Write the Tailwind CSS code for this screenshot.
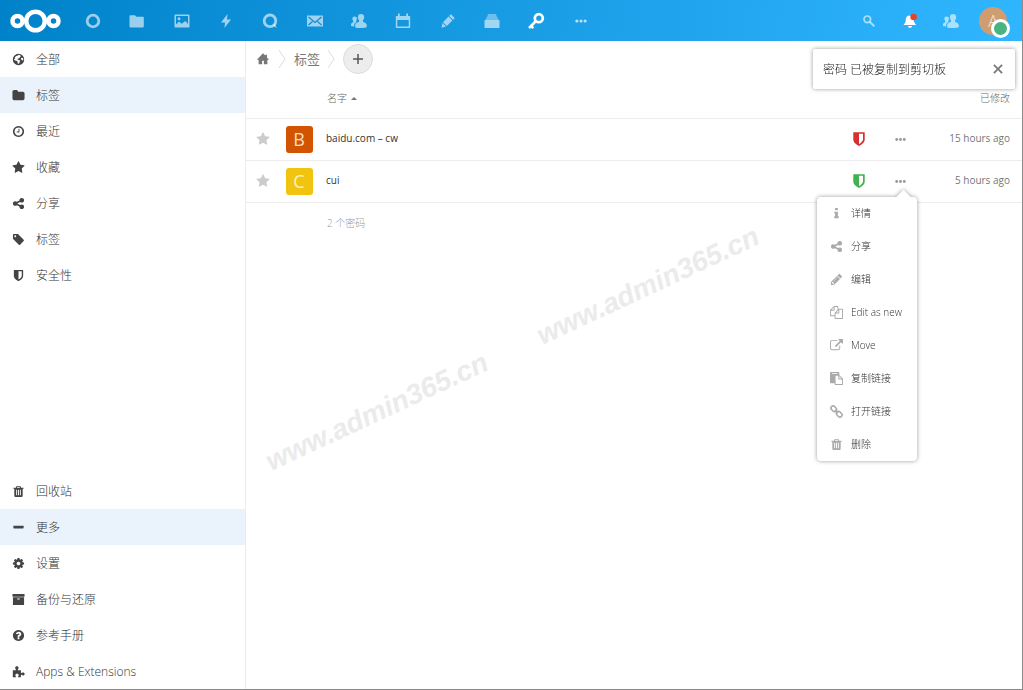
<!DOCTYPE html>
<html lang="zh-CN">
<head>
<meta charset="utf-8">
<title>密码</title>
<script src="https://cdn.jsdelivr.net/npm/@tailwindcss/browser@4"></script>
</head>
<body class="flex min-h-screen flex-col border-r border-b border-[#8a8a8a] bg-white font-['Open_Sans','Noto_Sans_CJK_SC',sans-serif] text-xs font-light text-[#333]">

<svg class="hidden" aria-hidden="true">
  <symbol id="star" viewBox="0 0 1792 1792"><path d="M1728 647q0 22-26 48l-363 354 86 500q1 7 1 20 0 21-10.500 35.500t-30.500 14.500q-19 0-40-12l-449-236-449 236q-22 12-40 12-21 0-31.500-14.500t-10.500-35.500q0-6 2-20l86-500-364-354q-25-27-25-48 0-37 56-46l502-73 225-455q19-41 49-41t49 41l225 455 502 73q56 9 56 46z"/></symbol>
  <symbol id="folder" viewBox="0 0 1792 1792"><path d="M1728 608v704q0 92-66 158t-158 66h-1216q-92 0-158-66t-66-158v-960q0-92 66-158t158-66h320q92 0 158 66t66 158v32h672q92 0 158 66t66 158z"/></symbol>
  <symbol id="clock" viewBox="0 0 1792 1792"><path d="M1024 544v448q0 14-9 23t-23 9h-320q-14 0-23-9t-9-23v-64q0-14 9-23t23-9h224v-352q0-14 9-23t23-9h64q14 0 23 9t9 23zm416 352q0-148-73-273t-198-198-273-73-273 73-198 198-73 273 73 273 198 198 273 73 273-73 198-198 73-273zm224 0q0 209-103 385.500t-279.500 279.500-385.500 103-385.500-103-279.500-279.500-103-385.500 103-385.500 279.500-279.500 385.500-103 385.500 103 279.500 279.500 103 385.500z"/></symbol>
  <symbol id="share" viewBox="0 0 1792 1792"><path d="M1344 1024q133 0 226.500 93.500t93.500 226.500-93.500 226.500-226.500 93.500-226.500-93.500-93.500-226.500q0-12 2-34l-360-180q-92 86-218 86-133 0-226.500-93.500t-93.500-226.500 93.500-226.500 226.500-93.500q126 0 218 86l360-180q-2-22-2-34 0-133 93.500-226.500t226.500-93.500 226.500 93.500 93.500 226.500-93.500 226.500-226.500 93.500q-126 0-218-86l-360 180q2 22 2 34t-2 34l360 180q92-86 218-86z"/></symbol>
  <symbol id="tag" viewBox="0 0 1792 1792"><path d="M576 448q0-53-37.500-90.500t-90.500-37.500-90.500 37.500-37.500 90.500 37.500 90.500 90.500 37.500 90.500-37.500 37.500-90.500zm1067 576q0 53-37 90l-491 492q-39 37-91 37-53 0-90-37l-715-716q-38-37-64.500-101t-26.500-117v-416q0-52 38-90t90-38h416q53 0 117 26.500t102 64.500l715 714q37 39 37 91z"/></symbol>
  <symbol id="shield" viewBox="0 0 1792 1792"><path d="M1344 960v-640h-448v1137q119-63 213-137 235-184 235-360zm192-768v768q0 86-33.500 170.500t-83 150-118 127.500-126.500 103-121 77.500-89.500 49.500-42.500 20q-12 6-26 6t-26-6q-16-7-42.500-20t-89.500-49.500-121-77.500-126.500-103-118-127.500-83-150-33.500-170.500v-768q0-26 19-45t45-19h1152q26 0 45 19t19 45z"/></symbol>
  <symbol id="trash" viewBox="0 0 1792 1792"><path d="M704 1376v-704q0-14-9-23t-23-9h-64q-14 0-23 9t-9 23v704q0 14 9 23t23 9h64q14 0 23-9t9-23zm256 0v-704q0-14-9-23t-23-9h-64q-14 0-23 9t-9 23v704q0 14 9 23t23 9h64q14 0 23-9t9-23zm256 0v-704q0-14-9-23t-23-9h-64q-14 0-23 9t-9 23v704q0 14 9 23t23 9h64q14 0 23-9t9-23zm-544-992h448l-48-117q-7-9-17-11h-317q-10 2-17 11zm928 32v64q0 14-9 23t-23 9h-96v948q0 83-47 143.500t-113 60.500h-832q-66 0-113-58.500t-47-141.500v-952h-96q-14 0-23-9t-9-23v-64q0-14 9-23t23-9h309l70-167q15-37 54-63t79-26h320q40 0 79 26t54 63l70 167h309q14 0 23 9t9 23z"/></symbol>
  <symbol id="minus" viewBox="0 0 1792 1792"><path d="M1600 736v192q0 40-28 68t-68 28h-1216q-40 0-68-28t-28-68v-192q0-40 28-68t68-28h1216q40 0 68 28t28 68z"/></symbol>
  <symbol id="cog" viewBox="0 0 1792 1792"><path d="M1152 896q0-106-75-181t-181-75-181 75-75 181 75 181 181 75 181-75 75-181zm512-109v222q0 12-8 23t-20 13l-185 28q-19 54-39 91 35 50 107 138 10 12 10 25t-9 23q-27 37-99 108t-94 71q-12 0-26-9l-138-108q-44 23-91 38-16 136-29 186-7 28-36 28h-222q-14 0-24.500-8.500t-11.500-21.500l-28-184q-49-16-90-37l-141 107q-10 9-25 9-14 0-25-11-126-114-165-168-7-10-7-23 0-12 8-23 15-21 51-66.500t54-70.500q-27-50-41-99l-183-27q-13-2-21-12.500t-8-23.500v-222q0-12 8-23t19-13l186-28q14-46 39-92-40-57-107-138-10-12-10-24 0-10 9-23 26-36 98.500-107.500t94.500-71.500q13 0 26 10l138 107q44-23 91-38 16-136 29-186 7-28 36-28h222q14 0 24.500 8.500t11.500 21.500l28 184q49 16 90 37l142-107q9-9 24-9 13 0 25 10 129 119 165 170 7 8 7 22 0 12-8 23-15 21-51 66.500t-54 70.500q26 50 41 98l183 28q13 2 21 12.500t8 23.500z"/></symbol>
  <symbol id="archive" viewBox="0 0 1792 1792"><path d="M1088 832q0-26-19-45t-45-19h-256q-26 0-45 19t-19 45 19 45 45 19h256q26 0 45-19t19-45zm576-192v960q0 26-19 45t-45 19h-1408q-26 0-45-19t-19-45v-960q0-26 19-45t45-19h1408q26 0 45 19t19 45zm64-448v256q0 26-19 45t-45 19h-1536q-26 0-45-19t-19-45v-256q0-26 19-45t45-19h1536q26 0 45 19t19 45z"/></symbol>
  <symbol id="question" viewBox="0 0 1792 1792"><path d="M1024 1376v-192q0-14-9-23t-23-9h-192q-14 0-23 9t-9 23v192q0 14 9 23t23 9h192q14 0 23-9t9-23zm256-672q0-88-55.500-163t-138.500-116-170-41q-243 0-371 213-15 24 8 42l132 100q7 6 19 6 16 0 25-12 53-68 86-92 34-24 86-24 48 0 85.500 26t37.500 59q0 38-20 61t-68 45q-63 28-115.500 86.500t-52.500 125.500v36q0 14 9 23t23 9h192q14 0 23-9t9-23q0-19 21.500-49.500t54.500-49.500q32-18 49-28.500t46-35 44.500-48 28-60.500 12.500-81zm384 192q0 209-103 385.500t-279.500 279.500-385.500 103-385.500-103-279.500-279.500-103-385.500 103-385.500 279.500-279.500 385.500-103 385.500 103 279.500 279.500 103 385.500z"/></symbol>
  <symbol id="pencil" viewBox="0 0 1792 1792"><path d="M491 1536l91-91-235-235-91 91v107h128v128h107zm523-928q0-22-22-22-10 0-17 7l-542 542q-7 7-7 17 0 22 22 22 10 0 17-7l542-542q7-7 7-17zm-54-192l416 416-832 832h-416v-416zm683 96q0 53-37 90l-166 166-416-416 166-165q36-38 90-38 53 0 91 38l235 234q37 39 37 91z"/></symbol>
  <symbol id="external" viewBox="0 0 1792 1792"><path d="M1408 928v320q0 119-84.500 203.500t-203.500 84.500h-832q-119 0-203.500-84.500t-84.500-203.500v-832q0-119 84.500-203.500t203.500-84.500h704q14 0 23 9t9 23v64q0 14-9 23t-23 9h-704q-66 0-113 47t-47 113v832q0 66 47 113t113 47h832q66 0 113-47t47-113v-320q0-14 9-23t23-9h64q14 0 23 9t9 23zm384-864v512q0 26-19 45t-45 19-45-19l-176-176-652 652q-10 10-23 10t-23-10l-114-114q-10-10-10-23t10-23l652-652-176-176q-19-19-19-45t19-45 45-19h512q26 0 45 19t19 45z"/></symbol>
  <symbol id="files" viewBox="0 0 1792 1792"><path d="M1696 384q40 0 68 28t28 68v1216q0 40-28 68t-68 28h-960q-40 0-68-28t-28-68v-288h-544q-40 0-68-28t-28-68v-672q0-40 20-88t48-76l408-408q28-28 76-48t88-20h416q40 0 68 28t28 68v328q68-40 128-40h416zm-544 213l-299 299h299v-299zm-640-384l-299 299h299v-299zm196 647l316-316v-416h-384v416q0 40-28 68t-68 28h-416v640h512v-256q0-40 20-88t48-76zm956 804v-1152h-384v416q0 40-28 68t-68 28h-416v640h896z"/></symbol>
  <symbol id="info" viewBox="0 0 1792 1792"><path d="M1216 1344v128q0 26-19 45t-45 19h-512q-26 0-45-19t-19-45v-128q0-26 19-45t45-19h64v-384h-64q-26 0-45-19t-19-45v-128q0-26 19-45t45-19h384q26 0 45 19t19 45v576h64q26 0 45 19t19 45zm-128-1152v192q0 26-19 45t-45 19h-256q-26 0-45-19t-19-45v-192q0-26 19-45t45-19h256q26 0 45 19t19 45z"/></symbol>
  <symbol id="paste" viewBox="0 0 1792 1792"><path d="M768 1664h896v-640h-416q-40 0-68-28t-28-68v-416h-384v1152zm256-1440v-64q0-13-9.500-22.500t-22.500-9.500h-704q-13 0-22.500 9.500t-9.500 22.500v64q0 13 9.500 22.500t22.500 9.500h704q13 0 22.500-9.500t9.500-22.500zm256 672h299l-299-299v299zm512 128v672q0 40-28 68t-68 28h-960q-40 0-68-28t-28-68v-160h-544q-40 0-68-28t-28-68v-1344q0-40 28-68t68-28h1088q40 0 68 28t28 68v328q21 13 36 28l408 408q28 28 48 76t20 88z"/></symbol>
  <symbol id="link" viewBox="0 0 16 16"><g fill="none" stroke="currentColor" stroke-width="1.900" transform="rotate(45 8 8)"><rect x="-.6" y="5.400" width="7.600" height="5.200" rx="2.600"/><rect x="9" y="5.400" width="7.600" height="5.200" rx="2.600"/><path d="M5.500 8h5"/></g></symbol>
  <symbol id="globe" viewBox="0 0 16 16"><path fill-rule="evenodd" d="M8 1a7 7 0 1 1 0 14A7 7 0 0 1 8 1zM8.500 2.300 6.800 3.400 5.200 3.700 3.600 5.300l.2 1.500L2.300 8l1.500 1.200 1.800.3 1.200 1 .1 1.700.8 1.400 1.300-1.200.4-1.500 1-1-1.600-1.200-2-.4.300-1.100L9 6l1.700-1.600-.6-1.500zM12 5.700l-1.200 1.200.8 1.500 1.300.9 1-.7-.2-2.100z"/></symbol>
  <symbol id="puzzle" viewBox="0 0 16 16"><path d="M1 6.500h3.800c.3-.8-.9-1.500-.9-3C3.900 2.200 4.700 1.400 6 1.400s2.100.8 2.100 2.100c0 1.500-1.200 2.200-.9 3H11v3.300c.8.300 1.300-.7 2.600-.7 1.200 0 2 .8 2 1.900s-.8 1.900-2 1.900c-1.300 0-1.800-1-2.600-.7V15H7.400c-.4-.8.800-1.300.8-2.500 0-1-.8-1.700-2-1.700s-2.100.7-2.100 1.700c0 1.200 1.300 1.700.9 2.500H1z"/></symbol>
  <symbol id="home" viewBox="0 0 16 16"><path d="M8 1.500 1 8.800h2V14h4v-4h2v4h4V8.800h2l-2.500-2.600V3h-2v1.100z"/></symbol>
  <symbol id="dots" viewBox="0 0 16 16"><circle cx="2.500" cy="8" r="2.100"/><circle cx="8" cy="8" r="2.100"/><circle cx="13.500" cy="8" r="2.100"/></symbol>
  <symbol id="person" viewBox="0 0 16 16"><path d="M10 1c-1.900 0-3.100 1.300-3.100 3.100 0 1.500.5 2.600 1.100 3.200v1.500c-1 .6-3.500 1.100-3.700 2.700-.2 1.700-.1 2.800 0 3C5 15 8 15 10 15s5-.2 5.700-.7c.3-1 .1-2-.1-2.800-.4-1.500-2.600-2-3.600-2.700V7.300c.6-.6 1.200-1.700 1.200-3.200C13.200 2.300 12 1 10 1z"/><path d="M3.600 3.600c-1.400 0-2.200.9-2.200 2.200 0 1 .4 1.800.8 2.300v1.100C1.500 9.700.1 10 0 11.200c-.1 1.100 0 1.600.1 1.800.8.300 2 .4 3 .4.100-1.900.2-3.500 2.600-4.400L5.100 8.100c.4-.5.8-1.300.8-2.300 0-1.300-.9-2.200-2.300-2.200z"/></symbol>
</svg>

<header class="flex h-[41px] items-center justify-between bg-[linear-gradient(100deg,#0082c9_0%,#30b6ff_100%)] fill-current text-white">
  <div class="flex items-center">
    <a href="#" aria-label="Nextcloud" class="flex w-[71px] pl-[10px]">
      <svg class="h-6 w-[51px]" viewBox="0 0 51 24" fill="none" stroke="currentColor" stroke-width="4.500"><circle cx="25.500" cy="12" r="9.300"/><circle cx="7.500" cy="12" r="5"/><circle cx="43.500" cy="12" r="5"/></svg>
    </a>
    <nav class="grid w-[532px] grid-cols-12 items-center justify-items-center" aria-label="应用">
      <a href="#" aria-label="Dashboard" class="text-white/60"><svg class="size-4" viewBox="0 0 16 16"><circle cx="8" cy="8" r="5.800" fill="none" stroke="currentColor" stroke-width="2.800"/></svg></a>
      <a href="#" aria-label="文件" class="text-white/60"><svg class="size-4" viewBox="0 0 16 16"><path d="M1.200 2.200h4.600l1.700 1.600h6.500c.4 0 .8.300.8.800v9c0 .4-.4.800-.8.800H1.200c-.4 0-.7-.4-.7-.8V2.900c0-.4.300-.7.700-.7z"/></svg></a>
      <a href="#" aria-label="照片" class="text-white/60"><svg class="size-4" viewBox="0 0 16 16"><path fill-rule="evenodd" d="M1.200 1.500h13.600c.4 0 .7.300.7.700v11.600c0 .4-.3.700-.7.700H1.200c-.4 0-.7-.3-.7-.7V2.200c0-.4.300-.7.700-.7zM2 3v8.500l3-3 2.500 2.300L11.500 8l2.500 3V3zM5 4.200A1.500 1.500 0 1 1 5 7.200 1.500 1.500 0 0 1 5 4.200z"/></svg></a>
      <a href="#" aria-label="动态" class="text-white/60"><svg class="size-4" viewBox="0 0 16 16"><path d="M9.500 1 3 9.500h4L6.500 15 13 6.500H9z"/></svg></a>
      <a href="#" aria-label="Talk" class="text-white/60"><svg class="size-4" viewBox="0 0 16 16"><circle cx="8" cy="7.800" r="5.800" fill="none" stroke="currentColor" stroke-width="2.800"/><path d="m11 12.500 1.500-2 2.500 4.800z"/></svg></a>
      <a href="#" aria-label="邮件" class="text-white/60"><svg class="size-[18px]" viewBox="0 0 18 18"><path d="M1 3.500h16v11H1z"/><path d="m2.500 5 6.500 5.500L15.500 5M2.500 13l4-3.500m9 3.500-4-3.500" fill="none" stroke="#118bd3" stroke-width="1.200"/></svg></a>
      <a href="#" aria-label="联系人" class="text-white/60"><svg class="size-4"><use href="#person"/></svg></a>
      <a href="#" aria-label="日历" class="text-white/60"><svg class="size-4" viewBox="0 0 16 16"><path fill-rule="evenodd" d="M3 .8c0-.5 1.800-.5 1.800 0V3h6.400V.8c0-.5 1.800-.5 1.800 0V3h1.200c.7 0 1 .4 1 1v10c0 .6-.3 1-1 1H1.800c-.6 0-1-.4-1-1V4c0-.6.4-1 1-1H3zM2.300 7v6.500h11.400V7z"/></svg></a>
      <a href="#" aria-label="备忘录" class="text-white/60"><svg class="size-4" viewBox="0 0 16 16"><path d="m11.500 1.800 2.700 2.700c.4.400.4.800 0 1.200l-1.100 1.100-3.900-3.900 1.100-1.100c.4-.4.800-.4 1.200 0zM8.600 3.600l3.800 3.800-5.600 5.600L3 9.200zM2.500 10l3.500 3.500-4.500 1.200z"/></svg></a>
      <a href="#" aria-label="Deck" class="text-white/60"><svg class="size-4" viewBox="0 0 16 16"><path d="M1 7h14c.3 0 .5.200.5.500V14c0 .6-.4 1-1 1h-13c-.6 0-1-.4-1-1V7.500C.5 7.200.7 7 1 7z"/><path opacity=".6" d="M2.700 3.800h10.600L14.500 7h-13zM4 1h8l.8 2.800H3.200z"/></svg></a>
      <a href="#" aria-label="密码" class="text-white"><svg class="size-[18px]" viewBox="0 0 18 18" fill="none" stroke="currentColor"><circle cx="11.800" cy="6.200" r="4" stroke-width="2.800"/><path d="m9 9-7 7M3.300 13.200l3 3" stroke-width="2.600"/></svg></a>
      <a href="#" aria-label="更多应用" class="text-white/70"><svg class="size-3"><use href="#dots"/></svg></a>
    </nav>
  </div>
  <div class="flex items-center pr-[15px]">
    <button type="button" aria-label="搜索" class="flex w-[41px] justify-center text-white/60"><svg class="size-3" viewBox="0 0 12 12" fill="none" stroke="currentColor"><circle cx="4.300" cy="4.300" r="3.300" stroke-width="1.700"/><path d="m6.700 6.700 4.600 4.600" stroke-width="2"/></svg></button>
    <button type="button" aria-label="通知" class="flex w-[41px] justify-center"><svg class="size-4" viewBox="0 0 16 16"><path d="M7 2.500c-2.400.4-3.200 2-3.200 4.500 0 2.700-1.300 3.500-2 4.200V12h12v-.8c-.7-.7-2-1.500-2-4.200 0-2.500-1.500-4.100-4.800-4.500zM6 13h4c0 1-.8 1.800-2 1.800S6 14 6 13z"/><circle cx="11.600" cy="4" r="3.300" fill="#e0452b"/></svg></button>
    <button type="button" aria-label="联系人菜单" class="flex w-[41px] justify-center text-white/60"><svg class="size-4"><use href="#person"/></svg></button>
    <button type="button" aria-label="用户" class="relative ml-2 flex size-7 items-center justify-center rounded-full bg-[#cf9d70] text-base text-white/80">A<span class="absolute -right-[3px] -bottom-[3px] size-[19px] rounded-full border-[3px] border-white bg-[#49b382]"></span></button>
  </div>
</header>

<div class="flex grow">
  <nav class="flex w-[246px] shrink-0 flex-col border-r border-[#ececec] fill-[#444] [&_span]:pt-0.5" aria-label="导航">
    <a href="#" class="flex h-9 items-center gap-[11px] pl-3"><svg class="size-[13px]"><use href="#globe"/></svg><span>全部</span></a>
    <a href="#" class="flex h-9 items-center gap-[11px] bg-[#eaf3fb] pl-3"><svg class="size-[13px]"><use href="#folder"/></svg><span>标签</span></a>
    <a href="#" class="flex h-9 items-center gap-[11px] pl-3"><svg class="size-[13px]"><use href="#clock"/></svg><span>最近</span></a>
    <a href="#" class="flex h-9 items-center gap-[11px] pl-3"><svg class="size-[13px]"><use href="#star"/></svg><span>收藏</span></a>
    <a href="#" class="flex h-9 items-center gap-[11px] pl-3"><svg class="size-[13px]"><use href="#share"/></svg><span>分享</span></a>
    <a href="#" class="flex h-9 items-center gap-[11px] pl-3"><svg class="size-[13px]"><use href="#tag"/></svg><span>标签</span></a>
    <a href="#" class="flex h-9 items-center gap-[11px] pl-3"><svg class="size-[13px]"><use href="#shield"/></svg><span>安全性</span></a>
    <a href="#" class="mt-auto flex h-9 items-center gap-[11px] pl-3"><svg class="size-[13px]"><use href="#trash"/></svg><span>回收站</span></a>
    <a href="#" class="flex h-9 items-center gap-[11px] bg-[#eaf3fb] pl-3"><svg class="size-[13px]"><use href="#minus"/></svg><span>更多</span></a>
    <a href="#" class="flex h-9 items-center gap-[11px] pl-3"><svg class="size-[13px]"><use href="#cog"/></svg><span>设置</span></a>
    <a href="#" class="flex h-9 items-center gap-[11px] pl-3"><svg class="size-[13px]"><use href="#archive"/></svg><span>备份与还原</span></a>
    <a href="#" class="flex h-9 items-center gap-[11px] pl-3"><svg class="size-[13px]"><use href="#question"/></svg><span>参考手册</span></a>
    <a href="#" class="flex h-9 items-center gap-[11px] pl-3"><svg class="size-[13px]"><use href="#puzzle"/></svg><span>Apps &amp; Extensions</span></a>
  </nav>

  <main class="relative grow">
    <div class="flex h-9 items-center pl-[10px]">
      <a href="#" aria-label="首页"><svg class="size-[14px] fill-[#777]"><use href="#home"/></svg></a>
      <svg class="ml-2 h-5 w-[9px] fill-none stroke-[#ddd]" viewBox="0 0 9 20"><path d="m1 1 6 9-6 9"/></svg>
      <a href="#" class="ml-[7px] pt-0.5 text-[13px] font-normal text-[#777]">标签</a>
      <svg class="ml-[7px] h-5 w-[9px] fill-none stroke-[#ddd]" viewBox="0 0 9 20"><path d="m1 1 6 9-6 9"/></svg>
      <button type="button" aria-label="新建" class="ml-[7px] flex size-[30px] items-center justify-center rounded-full border border-[#dcdcdc] bg-[#ededed]"><svg class="size-3 stroke-[#555]" viewBox="0 0 12 12"><path d="M6 1v10M1 6h10" stroke-width="1.500"/></svg></button>
    </div>

    <table class="w-full table-fixed border-collapse text-[10px]">
      <colgroup><col class="w-[33px]"><col class="w-10"><col><col class="w-[41px]"><col class="w-[42px]"><col class="w-[101px]"></colgroup>
      <thead>
        <tr class="h-[41px] border-b border-[#ececec] text-[#666]">
          <th></th><th></th>
          <th class="pt-0.5 pl-2 text-left font-light"><button type="button" class="flex items-center gap-1">名字 <svg class="h-[3px] w-[6px] fill-[#777]" viewBox="0 0 6 3"><path d="M0 3 3 0 6 3z"/></svg></button></th>
          <th></th><th></th>
          <th class="pt-0.5 pr-3 text-right font-light">已修改</th>
        </tr>
      </thead>
      <tbody>
        <tr class="h-[42px] border-b border-[#ececec]">
          <td><button type="button" aria-label="收藏" class="flex w-full justify-center"><svg class="size-[14px] fill-[#ccc]"><use href="#star"/></svg></button></td>
          <td><span class="mx-auto flex size-[27px] items-center justify-center rounded-[3px] bg-[#d35400] text-lg font-normal text-[#fbdcc0]">B</span></td>
          <td class="pl-[7px] font-normal text-[#333]">baidu.com – cw</td>
          <td><svg class="mx-auto size-4 fill-[#d3302f]"><use href="#shield"/></svg></td>
          <td><button type="button" aria-label="操作" class="flex w-full justify-center"><svg class="size-[11px] fill-[#999]"><use href="#dots"/></svg></button></td>
          <td class="pr-3 text-right font-normal text-[#777]">15 hours ago</td>
        </tr>
        <tr class="h-[42px] border-b border-[#ececec]">
          <td><button type="button" aria-label="收藏" class="flex w-full justify-center"><svg class="size-[14px] fill-[#ccc]"><use href="#star"/></svg></button></td>
          <td><span class="mx-auto flex size-[27px] items-center justify-center rounded-[3px] bg-[#f1c40f] text-lg font-normal text-[#fdf3c4]">C</span></td>
          <td class="pl-[7px] font-normal text-[#333]">cui</td>
          <td><svg class="mx-auto size-4 fill-[#3fb34f]"><use href="#shield"/></svg></td>
          <td class="relative">
            <button type="button" aria-label="操作" class="flex w-full justify-center"><svg class="size-[11px] fill-[#999]"><use href="#dots"/></svg></button>
            <div class="absolute top-9 right-1 z-10 w-[100px] rounded-sm bg-white drop-shadow-[0_0_2px_rgba(0,0,0,0.4)]">
              <div class="absolute -top-[5px] right-2 size-[11px] rotate-45 bg-white"></div>
              <ul class="relative fill-[#aaa] [&_span]:pt-0.5">
                <li><button type="button" class="flex h-[33px] w-full items-center gap-2 pl-[13px]"><svg class="size-[13px]"><use href="#info"/></svg><span>详情</span></button></li>
                <li><button type="button" class="flex h-[33px] w-full items-center gap-2 pl-[13px]"><svg class="size-[13px]"><use href="#share"/></svg><span>分享</span></button></li>
                <li><button type="button" class="flex h-[33px] w-full items-center gap-2 pl-[13px]"><svg class="size-[13px]"><use href="#pencil"/></svg><span>编辑</span></button></li>
                <li><button type="button" class="flex h-[33px] w-full items-center gap-2 pl-[13px]"><svg class="size-[13px]"><use href="#files"/></svg><span>Edit as new</span></button></li>
                <li><button type="button" class="flex h-[33px] w-full items-center gap-2 pl-[13px]"><svg class="size-[13px]"><use href="#external"/></svg><span>Move</span></button></li>
                <li><button type="button" class="flex h-[33px] w-full items-center gap-2 pl-[13px]"><svg class="size-[13px]"><use href="#paste"/></svg><span>复制链接</span></button></li>
                <li><button type="button" class="flex h-[33px] w-full items-center gap-2 pl-[13px]"><svg class="size-[13px] text-[#aaa]"><use href="#link"/></svg><span>打开链接</span></button></li>
                <li><button type="button" class="flex h-[33px] w-full items-center gap-2 pl-[13px]"><svg class="size-[13px]"><use href="#trash"/></svg><span>删除</span></button></li>
              </ul>
            </div>
          </td>
          <td class="pr-3 text-right font-normal text-[#777]">5 hours ago</td>
        </tr>
      </tbody>
      <tfoot>
        <tr class="h-[42px] text-[#999]"><td></td><td></td><td class="pl-2" colspan="4">2 个密码</td></tr>
      </tfoot>
    </table>

    <div class="pointer-events-none font-['Liberation_Sans',sans-serif] text-[28px] leading-8 font-bold text-[#ebebeb] italic select-none" aria-hidden="true">
      <span class="absolute top-[355px] left-[10px] -rotate-[25deg]">www.admin365.cn</span>
      <span class="absolute top-[229px] left-[281px] -rotate-[25deg]">www.admin365.cn</span>
    </div>
  </main>
</div>

<div role="status" class="fixed top-[49px] right-2 flex h-10 w-[202px] items-center justify-between rounded-xs bg-white pr-3 pl-[10px] text-[#222] shadow-[0_0_4px_rgba(0,0,0,0.4)]">
  <span class="pt-0.5">密码 已被复制到剪切板</span>
  <button type="button" aria-label="关闭"><svg class="size-[10px] stroke-[#777]" viewBox="0 0 11 11"><path d="m1 1 9 9m0-9-9 9" stroke-width="1.900"/></svg></button>
</div>
</body>
</html>
